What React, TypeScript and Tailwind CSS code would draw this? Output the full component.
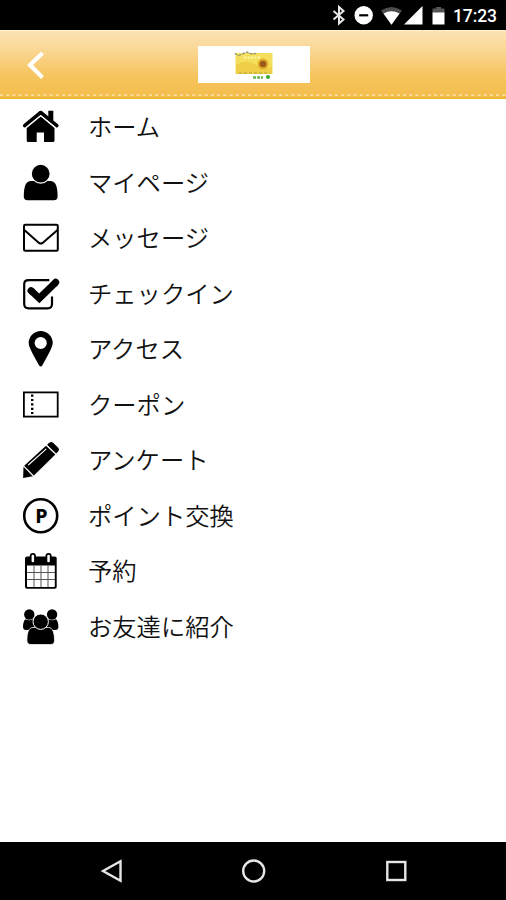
import type { ReactNode } from "react";

const icons: Record<string, ReactNode> = {
  home: (
    <>
      <path d="M3.700 19 17.700 7.400 31.500 19V31.500Q31.500 33 30 33H21V23.400H13.700V33H5.300Q3.700 33 3.700 31.500Z" />
      <path d="M25.300 1.800h5v11l-5-4z" />
      <path d="M1.700 16.600 17.700 3.500 33.800 16.600" fill="none" stroke="#000" strokeWidth="3.600" strokeLinecap="round" strokeLinejoin="round" />
      <path d="M3 18.600 17.700 6.600 32.500 18.600" fill="none" stroke="#fff" strokeWidth="1.100" />
    </>
  ),
  user: (
    <>
      <path d="M8 16C3 16 .8 21 .8 31.500Q.8 35.200 4.500 35.200H30.900Q34.600 35.200 34.600 31.500C34.600 21 32.400 16 27.400 16Z" />
      <circle cx="17.700" cy="8.700" r="9.500" stroke="#fff" strokeWidth="1.200" />
    </>
  ),
  mail: (
    <g fill="none" stroke="#000" strokeWidth="2">
      <rect x="1" y="4.800" width="33.800" height="26" rx="1.200" />
      <path d="M1.300 10 16 22.900Q17.800 24.200 19.600 22.900L34.500 10" />
    </g>
  ),
  check: (
    <g fill="none" stroke="#000">
      <path d="M26.300 4.100H5.500Q1.200 4.100 1.200 8.400V28Q1.200 32.300 5.500 32.300H24.700Q29 32.300 29 28V20.500" strokeWidth="2.200" />
      <path d="M8.200 14.800 16.300 22.300 32.600 6.400" strokeWidth="7" />
      <path d="m8 14.600.4.400M32.300 6.700l.4-.4" strokeWidth="7" strokeLinecap="round" />
    </g>
  ),
  pin: (
    <path fillRule="evenodd" d="M17.700 0a12 12 0 0 1 12 12c0 4.700-6.300 14.600-10 21.700q-2 3.800-4 0C12 26.600 5.700 16.700 5.700 12a12 12 0 0 1 12-12Zm0 5.900a6.100 6.100 0 1 0 0 12.200 6.100 6.100 0 0 0 0-12.200Z" />
  ),
  coupon: (
    <g fill="none" stroke="#000">
      <rect x=".9" y="5.400" width="33.800" height="24.200" strokeWidth="1.800" />
      <path d="M9.200 7.500V27" strokeWidth="2.400" strokeDasharray="2.200 2.200" />
    </g>
  ),
  pencil: (
    <>
      <path d="M24.100 2.800 26.200.8Q28.200-1 30.100.8L35.200 5.800Q37 7.500 35.200 9.400L33.100 11.600Z" />
      <path d="M23 3.700 32.300 12.500 10.900 33.400 1.200 23.800Z" />
      <path d="M.5 24.800 9.800 34.300.1 35.900Z" />
      <path d="M5.300 23 23.300 6.900" stroke="#fff" strokeWidth="1.100" />
    </>
  ),
  point: (
    <>
      <circle cx="17.700" cy="17.700" r="16.500" fill="none" stroke="#000" strokeWidth="2.600" />
      <text x="18.300" y="24.600" textAnchor="middle" stroke="#000" strokeWidth=".2" className="font-['Open_Sans',sans-serif] text-[19.500px] font-bold">P</text>
    </>
  ),
  calendar: (
    <>
      <rect x="2" y="3.500" width="31.700" height="32.200" rx="2" />
      <path d="M4 12.600H31.800V33.200Q31.800 34 31 34H4.800Q4 34 4 33.200Z" fill="#fff" />
      <path d="M11 12.500V34M18 12.500V34M25 12.500V34M4 19.500H32M4 26.500H32" stroke="#555" strokeWidth="1" />
      <g fill="#fff" stroke="#000" strokeWidth="1.800">
        <rect x="7.700" y=".8" width="4.300" height="9.400" rx="2" />
        <rect x="23.400" y=".8" width="4.300" height="9.400" rx="2" />
      </g>
    </>
  ),
  group: (
    <>
      <circle cx="6.300" cy="5.500" r="5.200" />
      <circle cx="29.100" cy="5.500" r="5.200" />
      <path d="M2.500 10.300Q6.300 12.300 10 10.300L14 21H3Q0 21 0 17.500 .2 12 2.500 10.300ZM32.900 10.300Q29.100 12.300 25.400 10.300L21.400 21H32.400Q35.400 21 35.400 17.500 35.200 12 32.900 10.300Z" />
      <path d="M10 18.500C5.500 18.500 3.900 24 3.900 31.500Q3.900 35.600 8 35.600H27.400Q31.500 35.600 31.500 31.500C31.500 24 29.900 18.500 25.400 18.500Z" stroke="#fff" strokeWidth=".8" />
      <circle cx="17.700" cy="12.700" r="7.700" stroke="#fff" strokeWidth="1" />
    </>
  ),
};

const items = [
  { icon: "home", label: "ホーム" },
  { icon: "user", label: "マイページ" },
  { icon: "mail", label: "メッセージ" },
  { icon: "check", label: "チェックイン" },
  { icon: "pin", label: "アクセス" },
  { icon: "coupon", label: "クーポン" },
  { icon: "pencil", label: "アンケート" },
  { icon: "point", label: "ポイント交換" },
  { icon: "calendar", label: "予約" },
  { icon: "group", label: "お友達に紹介" },
];

function StatusBar() {
  return (
    <div className="flex h-[30px] shrink-0 items-center justify-end bg-black pr-[9px]">
      <svg width="116" height="22" viewBox="331 4 116 22" className="mr-[6px]">
        <path d="m333.500 11 10 8.500-4.500 4V7l4.500 4-10 8.500" fill="none" stroke="#e8e8e8" strokeWidth="2" />
        <circle cx="363.700" cy="15.300" r="9.200" fill="#fff" />
        <path d="M359.200 15.300h9" stroke="#000" strokeWidth="2.200" />
        <path d="M381 10.500Q391.500 3.500 402 10.500L391.500 24.800Z" fill="#4d4d4d" />
        <path d="M383.500 13.500Q391.500 9 399.500 13.500L391.500 24.800Z" fill="#fff" />
        <path d="M422.500 6V24.500H404Z" fill="#fff" />
        <path d="M432.500 8.500H436V7h5v1.500h3.500V13h-12Z" fill="#555" />
        <path d="M432.500 12.500h12v12h-12Z" fill="#fff" />
      </svg>
      <span className="w-[44px] whitespace-nowrap pt-[2px] font-[Roboto,sans-serif] text-[17.500px] leading-[30px] font-medium tracking-[-0.1px] text-white">17:23</span>
    </div>
  );
}

function Header() {
  return (
    <header className="flex h-[69px] shrink-0 flex-col border-t border-[#fff0ca] bg-linear-to-b from-[#fce3b4] via-[#f6c55f] via-65% to-[#f4bc4a]">
      <div className="grid h-[62px] grid-cols-[1fr_112px_1fr] items-center pt-[5px] pl-px">
        <svg width="20" height="30" viewBox="26 50 20 30" className="ml-[25px]">
          <path d="M42.500 53 30 65 42.500 77.500" fill="none" stroke="#fff" strokeWidth="4.200" />
        </svg>
        <div className="-mt-px flex h-[37px] items-center justify-center bg-white">
          <svg width="42" height="35" viewBox="233 47 42 35">
            <rect x="235.500" y="53" width="37" height="21" fill="#f4df5c" />
            <path d="M236 65Q246 58 256 65T272 66V74H236Z" fill="#efcf48" />
            <path d="M235 53q3 4 7 1l5-2q4 3 10 1" fill="none" stroke="#8b8d78" strokeWidth="1.200" strokeDasharray="3 1" />
            <path d="M244 57.500h17" stroke="#fff8b5" strokeWidth="2" strokeDasharray="2 1.500" />
            <circle cx="263" cy="64" r="5.500" fill="#e2ad29" />
            <circle cx="263" cy="64" r="3.300" fill="#9a5a1e" />
            <path d="M239 73h31" stroke="#b7a23c" strokeWidth="1" strokeDasharray="3 2" />
            <path d="M253 77.500h10" stroke="#68b74f" strokeWidth="2.500" strokeDasharray="3 1" />
            <circle cx="268" cy="77" r="2" fill="#37a52c" />
          </svg>
        </div>
      </div>
      <div className="h-[6px] border-b-2 border-[#edb633]">
        <svg width="506" height="4" className="block">
          <path d="M0 2.200H506" stroke="#fbdc9f" strokeWidth="1.800" strokeDasharray="3.200 3" />
        </svg>
      </div>
    </header>
  );
}

export default function App() {
  return (
    <div className="flex h-[900px] w-[506px] flex-col overflow-hidden bg-white">
      <StatusBar />
      <Header />
      <main className="flex-1 pt-[0.5px]">
        {items.map(({ icon, label }) => (
          <div key={icon} className="flex h-[55.500px] items-center pl-[23px]">
            <svg width="36" height="36" viewBox="0 0 36 36" className="shrink-0 overflow-visible">
              {icons[icon]}
            </svg>
            <span className="ml-[29px] pb-[2.500px] font-['Noto_Sans_CJK_JP',sans-serif] text-[24.300px] leading-[36px] font-[350] text-[#111]">
              {label}
            </span>
          </div>
        ))}
      </main>
      <nav className="flex h-[58px] shrink-0 items-center justify-center bg-black pl-[2px]">
        <svg width="310" height="26" viewBox="99 858 310 26" fill="none" stroke="#e6e6e6" strokeWidth="2.400">
          <path d="M103 871 120.500 861.200V880.800Z" />
          <circle cx="253.700" cy="871" r="10.500" />
          <rect x="387.300" y="862" width="18" height="18" />
        </svg>
      </nav>
    </div>
  );
}
